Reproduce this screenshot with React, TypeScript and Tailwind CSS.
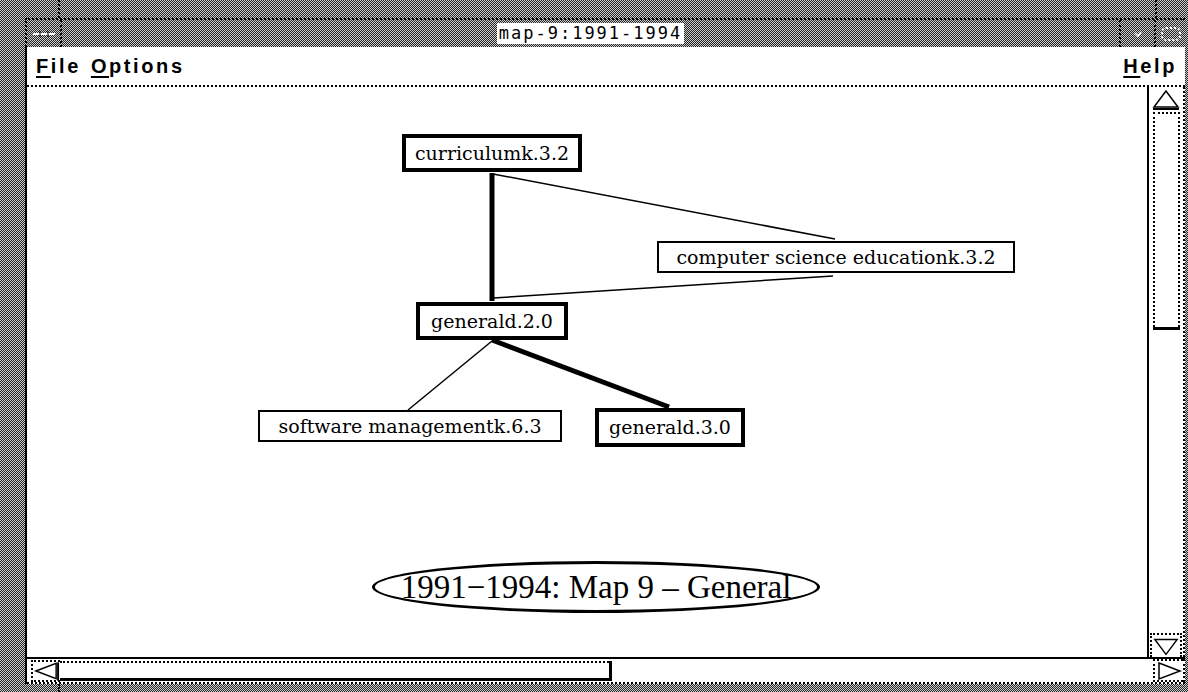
const pat =
  "bg-[image:repeating-conic-gradient(#262626_0%_25%,#cccccc_0%_50%)] bg-[length:2px_2px]";

function UpArrow() {
  return (
    <svg width="30" height="24" viewBox="0 0 30 24">
      <path d="M15 3 L3 19 L27 19 Z" fill="white" stroke="black" strokeWidth="1.5" />
      <line x1="2" y1="21" x2="28" y2="21" stroke="black" strokeWidth="2" />
    </svg>
  );
}

function DownArrow() {
  return (
    <svg width="30" height="24" viewBox="0 0 30 24">
      <path d="M3 5 L27 5 L15 21 Z" fill="white" stroke="black" strokeWidth="1.5" />
    </svg>
  );
}

function LeftArrow() {
  return (
    <svg width="28" height="22" viewBox="0 0 28 22">
      <path d="M3 11 L24 3 L24 19 Z" fill="white" stroke="black" strokeWidth="1.5" />
      <line x1="26" y1="2" x2="26" y2="21" stroke="black" strokeWidth="2" />
    </svg>
  );
}

function RightArrow() {
  return (
    <svg width="28" height="22" viewBox="0 0 28 22">
      <path d="M4 3 L25 11 L4 19 Z" fill="white" stroke="black" strokeWidth="1.5" />
    </svg>
  );
}

export default function App() {
  return (
    <div className={`w-[1188px] h-[692px] flex flex-col overflow-hidden ${pat}`}>
      {/* frame top */}
      <div className="h-[18px] flex shrink-0">
        <div className="w-[60px] border-r-2 border-dotted border-black" />
        <div className="flex-1" />
        <div className="w-[33px] border-l-2 border-dotted border-black" />
      </div>

      {/* title bar */}
      <div className="h-[29px] shrink-0 ml-[25px] mr-[3px] flex border-t-2 border-l-2 border-dotted border-black">
        <div className="w-[35px] border-r-2 border-dotted border-black flex items-center justify-center">
          <svg width="24" height="6" viewBox="0 0 24 6">
            <line x1="1" y1="3" x2="23" y2="3" stroke="white" strokeWidth="2" />
            <line x1="8" y1="0" x2="8" y2="6" stroke="black" strokeWidth="1" />
            <line x1="16" y1="0" x2="16" y2="6" stroke="black" strokeWidth="1" />
          </svg>
        </div>
        <div className="flex-1 flex items-center justify-center">
          <div className="bg-white h-[21px] px-[2px] flex items-center font-['DejaVu_Sans_Mono',monospace] text-[17px] tracking-[2px] text-black leading-none">
            map-9:1991-1994
          </div>
        </div>
        <div className="w-[35px] border-l-2 border-dotted border-black flex items-center justify-center">
          <svg width="10" height="8" viewBox="0 0 10 8">
            <path d="M2 3 L5 6 L8 2" fill="none" stroke="white" strokeWidth="1.5" />
          </svg>
        </div>
        <div className="w-[31px] border-l-2 border-dotted border-black flex items-center justify-center">
          <div className="w-[20px] h-[14px] rounded-[5px] border-2 border-dotted border-white" />
        </div>
      </div>

      {/* window body */}
      <div className="flex-1 flex min-h-0">
        <div className="w-[25px] shrink-0" />
        <div className="flex-1 mr-[3px] flex flex-col bg-white border-l-2 border-black min-w-0">
          {/* menu bar */}
          <div className="h-[40px] shrink-0 flex items-center justify-between pl-[9px] pr-[8px] border-b-2 border-dotted border-black font-['Liberation_Sans',Arial,sans-serif] font-bold text-[20px] tracking-[2.6px] text-black">
            <div className="flex gap-[10px]">
              <span>
                <span className="underline decoration-2 underline-offset-[3px]">F</span>ile
              </span>
              <span>
                <span className="underline decoration-2 underline-offset-[3px]">O</span>ptions
              </span>
            </div>
            <span>
              <span className="underline decoration-2 underline-offset-[3px]">H</span>elp
            </span>
          </div>

          {/* canvas + vertical scrollbar */}
          <div className="flex-1 flex min-h-0">
            <div className="flex-1 relative overflow-hidden font-['DejaVu_Serif',serif] text-[19px] text-black">
              <svg className="absolute inset-0" width="1118" height="568">
                <line x1="466" y1="87" x2="808" y2="152" stroke="black" strokeWidth="1.5" />
                <line x1="806" y1="189" x2="466" y2="211" stroke="black" strokeWidth="1.5" />
                <line x1="465" y1="86" x2="465" y2="214" stroke="black" strokeWidth="5" />
                <line x1="465" y1="254" x2="381" y2="323" stroke="black" strokeWidth="1.5" />
                <line x1="465" y1="253" x2="642" y2="320" stroke="black" strokeWidth="5" />
              </svg>

              <div className="absolute left-[375px] top-[47px] w-[180px] h-[38px] border-[4px] border-black bg-white flex items-center justify-center leading-none">
                curriculumk.3.2
              </div>
              <div className="absolute left-[630px] top-[154px] w-[358px] h-[32px] border-2 border-black bg-white flex items-center justify-center leading-none">
                computer science educationk.3.2
              </div>
              <div className="absolute left-[389px] top-[215px] w-[152px] h-[38px] border-[4px] border-black bg-white flex items-center justify-center leading-none">
                generald.2.0
              </div>
              <div className="absolute left-[231px] top-[323px] w-[304px] h-[32px] border-2 border-black bg-white flex items-center justify-center leading-none">
                software managementk.6.3
              </div>
              <div className="absolute left-[568px] top-[321px] w-[150px] h-[39px] border-[4px] border-black bg-white flex items-center justify-center leading-none">
                generald.3.0
              </div>

              <div className="absolute left-[345px] top-[474px] w-[448px] h-[52px] rounded-[50%] border-[3px] border-black bg-white flex items-center justify-center font-['Liberation_Serif','Times_New_Roman',serif] text-[33px] leading-none whitespace-nowrap">
                1991−1994: Map 9 – General
              </div>
            </div>

            {/* vertical scrollbar */}
            <div className="w-[38px] shrink-0 border-l-2 border-black flex">
              <div className="flex-1 flex flex-col items-center">
                <div className="h-[25px] flex items-end justify-center pt-[2px]">
                  <UpArrow />
                </div>
                <div className="w-[27px] h-[218px] border-b-[3px] border-black">
                  <div className="h-full border-2 border-b-0 border-dotted border-black bg-white" />
                </div>
                <div className="flex-1" />
                <div className="w-[32px] h-[24px] border-2 border-dotted border-black border-b-0 flex items-center justify-center">
                  <DownArrow />
                </div>
              </div>
              <div className="w-[2px] border-l-2 border-dotted border-black" />
            </div>
          </div>

          {/* horizontal scrollbar */}
          <div className="h-[27px] shrink-0 border-t-2 border-black flex flex-col">
            <div className="flex-1 flex items-center pl-[4px]">
              <div className="w-[29px] h-[22px] border-2 border-dotted border-black border-r-0 flex items-center justify-center">
                <LeftArrow />
              </div>
              <div className="w-[552px] h-[20px] border-r-[3px] border-b-[3px] border-black">
                <div className="h-full border-t-2 border-dotted border-black bg-white" />
              </div>
              <div className="flex-1" />
              <div className="w-[30px] h-[23px] border-2 border-r-0 border-dotted border-black flex items-center justify-center">
                <RightArrow />
              </div>
              <div className="w-[2px] self-stretch border-l-2 border-dotted border-black" />
            </div>
            <div className="h-[2px] border-t-2 border-dotted border-black" />
          </div>
        </div>
      </div>

      {/* frame bottom */}
      <div className="h-[8px] shrink-0 flex">
        <div className="w-[60px] border-r-2 border-dotted border-black" />
      </div>
    </div>
  );
}
